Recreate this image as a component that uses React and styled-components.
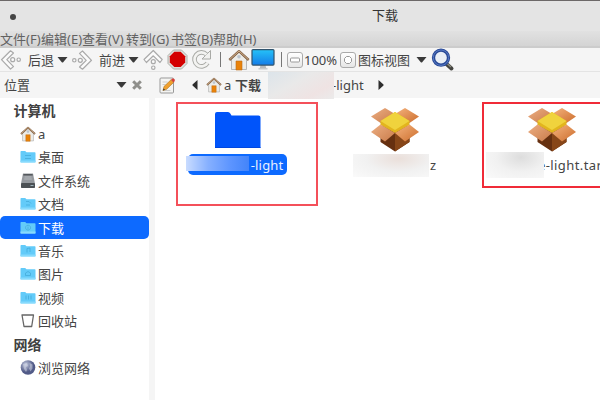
import React from 'react';
import styled, { createGlobalStyle } from 'styled-components';

const GlobalStyle = createGlobalStyle`
  body {
    margin: 0;
    overflow: hidden;
  }
  svg {
    display: block;
    flex: none;
  }
`;

const Window = styled.div`
  display: flex;
  flex-direction: column;
  width: 600px;
  height: 400px;
  overflow: hidden;
  background: #f5f5f5;
  color: #454545;
  font-family: 'Noto Sans', 'Noto Sans CJK SC', sans-serif;
  font-size: 13px;
  line-height: 18px;
  white-space: nowrap;
`;

const TitleBar = styled.div`
  display: flex;
  align-items: center;
  box-sizing: border-box;
  height: 31px;
  border-top: 1px solid #6c6868;
  background: #e4e4e4;
`;

const Dot = styled.span`
  width: 6px;
  height: 6px;
  margin: 1px 0 0 10px;
  border-radius: 50%;
  background: #444;
`;

const Title = styled.span`
  margin: 0 0 2px 356px;
  color: #333;
`;

const MenuBar = styled.div`
  display: flex;
  align-items: center;
  box-sizing: border-box;
  height: 17px;
  border-bottom: 2px solid #cccccc;
  background: linear-gradient(#e1e1e1, #d4d4d4);
`;

const MenuItem = styled.span`
  width: ${(props) => props.$width}px;
  color: #626262;
`;

const ToolBar = styled.div`
  display: flex;
  align-items: center;
  box-sizing: border-box;
  height: 24px;
  border-bottom: 1px solid #e4e4e4;
`;

const Tool = styled.div`
  display: flex;
  align-items: center;
  width: ${(props) => props.$width}px;
  margin-left: ${(props) => props.$gap || 0}px;
`;

const Separator = styled.div`
  width: 1px;
  height: 15px;
  margin-left: ${(props) => props.$gap}px;
  background: #777;
`;

const ZoomButton = styled.div`
  display: flex;
  align-items: center;
  justify-content: center;
  box-sizing: border-box;
  width: 16px;
  height: 16px;
  margin-left: ${(props) => props.$gap}px;
  border: 1px solid #aaa;
  border-radius: 3px;
  background: linear-gradient(#fff, #e6e6e6);
`;

const LocationBar = styled.div`
  display: flex;
  align-items: center;
  height: 26px;
`;

const PaneHeader = styled.div`
  display: flex;
  align-items: center;
  width: 155px;
`;

const PaneTitle = styled.span`
  width: 112px;
  margin-left: 4px;
`;

const Crumbs = styled.div`
  display: flex;
  align-items: center;
  height: 26px;
  padding-left: 4px;
`;

const Crumb = styled.span`
  width: ${(props) => props.$width}px;
  margin-left: ${(props) => props.$gap || 0}px;
  font-weight: ${(props) => (props.$current ? 700 : 400)};
`;

const CrumbSmudge = styled.div`
  position: relative;
  z-index: 1;
  width: 66px;
  height: 27px;
  margin-left: 5px;
  background: linear-gradient(150deg, #dce4ea, #e9e9e9 40%, #efe3e3 75%, #ebebeb);
`;

const Body = styled.div`
  display: flex;
  flex: 1;
`;

const SideBar = styled.div`
  width: 149px;
  padding-top: 1px;
  margin-right: 6px;
  background: #fff;
`;

const Heading = styled.div`
  display: flex;
  align-items: center;
  height: 23.4px;
  padding-left: 13.5px;
  font-size: 14px;
  font-weight: 700;
  color: #404040;
`;

const Place = styled.div`
  display: flex;
  align-items: center;
  gap: 2px;
  height: 23.4px;
  padding-left: 20px;
  border-radius: 5px;
  color: ${(props) => (props.$active ? '#fff' : '#454545')};
  background: ${(props) => (props.$active ? '#0d6aff' : 'transparent')};
`;

const Files = styled.div`
  display: grid;
  grid-template-columns: repeat(3, 157px);
  flex: 1;
  padding-left: 4px;
  overflow: hidden;
  background: #fff;
`;

const FileTile = styled.div`
  position: relative;
  display: flex;
  flex-direction: column;
  align-items: center;
  height: 110px;
  padding-top: 8px;
`;

const Picture = styled.div`
  display: flex;
  justify-content: center;
  box-sizing: border-box;
  width: 50px;
  height: 48px;
  padding-top: ${(props) => props.$drop}px;
`;

const SelectedName = styled.div`
  display: flex;
  align-items: center;
  justify-content: flex-end;
  box-sizing: border-box;
  width: 99px;
  height: 21px;
  margin-right: 1px;
  padding-right: 3px;
  border-radius: 5px;
  background: #0d6aff;
  color: #e8f0ff;
  letter-spacing: 0.2px;
`;

const FileName = styled.div`
  display: flex;
  align-items: center;
  align-self: flex-start;
  height: 22px;
  margin-left: ${(props) => props.$gap}px;
  letter-spacing: 0.4px;
`;

const Smudge = styled.div`
  position: relative;
  z-index: 1;
  width: ${(props) => props.$width}px;
  height: ${(props) => props.$height}px;
  margin-right: ${(props) => props.$overlap}px;
  background: radial-gradient(ellipse at 60% 20%, ${(props) => props.$tint}, #f1f1f1 50%, #fafafa);
`;

const BlueSmudge = styled.div`
  position: absolute;
  left: 27px;
  top: 58px;
  width: 63px;
  height: 15px;
  background: linear-gradient(90deg, #c9dcff, #86b0ff 35%, #5d95ff 70%, #4384fa);
`;

const Highlight = styled.div`
  position: absolute;
  left: ${(props) => props.$left}px;
  top: 4px;
  box-sizing: border-box;
  width: ${(props) => props.$width}px;
  height: ${(props) => props.$height}px;
  border: 2px solid ${(props) => props.$color};
`;

const CaretDown = () => (
  <svg width="11" height="6" viewBox="0 0 11 6">
    <path d="M0.5 0h10L6.2 5.2q-.7.6-1.4 0z" fill="#3a3a3a" />
  </svg>
);

const CaretSide = ({ flip }) => (
  <svg width="6" height="10" viewBox="0 0 6 10" transform={flip ? 'scale(-1 1)' : undefined}>
    <path d="M0.5 0L5.5 4.4v1.2L.5 10z" fill="#2d2d2d" />
  </svg>
);

const Arrow = ({ turn = 0 }) => (
  <svg width="22" height="22" viewBox="0 0 22 22">
    <g transform={`rotate(${turn} 11 11)`} stroke="#aaa" strokeWidth="1.2" fill="#fbfbfb">
      <path d="M10.500 1.800L13.500 4 6.800 10.700l6.700 6.900-3 2.400L1.500 10.700z" strokeLinejoin="round" />
      <circle cx="12.700" cy="10.700" r="2" />
      <circle cx="18.700" cy="10.700" r="1.700" />
    </g>
  </svg>
);

const StopIcon = () => (
  <svg width="21" height="21" viewBox="0 0 21 21">
    <path d="M6.500 1h8L20 6.500v8L14.500 20h-8L1 14.500v-8z" fill="#dedfdb" stroke="#aeb0aa" />
    <path d="M7.300 2.800h6.400l4.500 4.500v6.200L13.700 18H7.300l-4.500-4.500V7.300z" fill="#d40000" />
  </svg>
);

const ReloadIcon = () => (
  <svg width="21" height="21" viewBox="0 0 21 21" fill="none">
    <path d="M15.500 5.500A7 7 0 1 0 16.500 14" stroke="#a9aaa6" strokeWidth="4.600" />
    <path d="M19.500 1.500v8.500h-8.500z" fill="#f1f1ef" stroke="#a9aaa6" />
    <path d="M15.500 5.500A7 7 0 1 0 16.500 14" stroke="#f3f3f1" strokeWidth="2.700" />
  </svg>
);

const HomeIcon = ({ size }) => (
  <svg width={size} height={size} viewBox="0 0 22 22">
    <path d="M3.500 10L11 3l7.500 7v10.500h-15z" fill="#ecece8" stroke="#aaa" strokeWidth=".8" />
    <path d="M8 12h6v9H8z" fill="#e98208" stroke="#bd6d17" strokeWidth=".6" />
    <circle cx="11" cy="7.700" r="1.800" fill="#bcc5ce" />
    <path d="M1.300 11L11 2.200l9.700 8.800" fill="none" stroke="#856447" strokeWidth="2.400" strokeLinejoin="round" />
    <path d="M1.600 10.600L11 2l9.400 8.600" fill="none" stroke="#d0b08c" strokeWidth="1" />
  </svg>
);

const MonitorIcon = () => (
  <svg width="24" height="22" viewBox="0 0 24 22">
    <defs>
      <linearGradient id="screen" x2="0" y2="1">
        <stop stopColor="#25c3f8" />
        <stop offset="1" stopColor="#147ce8" />
      </linearGradient>
    </defs>
    <path d="M9.500 16h5l.8 3.500h-6.600z" fill="#b8bbbd" />
    <path d="M7.500 19.800h9" stroke="#c6c8ca" strokeWidth="1.400" />
    <rect x="1" y=".6" width="22" height="15.500" rx="1" fill="url(#screen)" stroke="#30546e" strokeWidth="1.200" />
  </svg>
);

const SearchIcon = () => (
  <svg width="24" height="24" viewBox="0 0 24 24">
    <path d="M15 15.500l5.500 5" stroke="#454541" strokeWidth="4" strokeLinecap="round" />
    <path d="M16 15.500l4 3.500" stroke="#8e8e80" strokeWidth="1.300" />
    <circle cx="10" cy="9.700" r="7.500" fill="#e9eff6" stroke="#2a4a97" strokeWidth="3.300" />
    <circle cx="10" cy="9.700" r="7.700" fill="none" stroke="#577bc4" strokeWidth="1" />
  </svg>
);

const EditIcon = () => (
  <svg width="17" height="18" viewBox="0 0 17 18">
    <rect x="1" y="2" width="13.500" height="15" rx="1" fill="#f4f4f2" stroke="#999" />
    <path d="M3.500 6h5M3.500 8.500h3M3.500 14.500h8" stroke="#ccc" />
    <path d="M4 14.500l1-4L12 3.800l2.600 2.600-7 6.900z" fill="#f0a02e" stroke="#a87222" strokeWidth=".6" />
    <path d="M12 3.800l1.200-1.200q1.300-.6 2.200.5.900 1.100.2 2.200l-1 1.100z" fill="#d8423b" />
    <path d="M4 14.500l.5-2 1.500 1.300z" fill="#333" />
  </svg>
);

const CloseIcon = () => (
  <svg width="12" height="12" viewBox="0 0 12 12">
    <path d="M2.200 2.200l7.600 7.600M9.800 2.200L2.200 9.800" stroke="#8f8f8b" strokeWidth="3" />
  </svg>
);

const marks = {
  desktop: 'M5 6.500h6M5 9.500h6',
  documents: 'M6 5.500h3l2 2M6 9h4',
  downloads: 'M8 5.200a2.500 2.500 0 1 0 .1 0M8 6.500v3',
  music: 'M7 9.500V5.500l3-.5v4',
  pictures: 'M5.500 9.500V7q2.500-3 5 0v2.500z',
  videos: 'M6 5.500v4M8.500 5.500v4M11 5.500v4',
};

const PlaceFolder = ({ mark }) => (
  <svg width="16" height="16" viewBox="0 0 16 16">
    <path d="M.5 2.700q0-.7.700-.7h4l1.300 1.200h8.300q.7 0 .7.700v9.100H.5z" fill="#63cbf9" />
    <path d="M.5 11.500h15v1.700q0 .5-.5.500H1q-.5 0-.5-.5z" fill="#86dafd" />
    <path d={marks[mark]} fill="none" stroke="#45abd9" strokeWidth=".8" />
  </svg>
);

const DiskIcon = () => (
  <svg width="16" height="16" viewBox="0 0 16 16">
    <path d="M3 .5h10l2 10H1z" fill="#95999e" />
    <path d="M3.500 1h9l.3 1.500H3.200z" fill="#55595d" />
    <path d="M4.500 4h7M4.200 6h7.600" stroke="#b4b8bc" />
    <rect x="1" y="10" width="14" height="5" rx=".7" fill="#4c5155" />
    <path d="M10.500 12.500h3" stroke="#9db3bc" />
  </svg>
);

const TrashIcon = () => (
  <svg width="16" height="16" viewBox="0 0 16 16">
    <path d="M2 2h11.500L11.700 13.500H4z" fill="#fff" stroke="#666" strokeWidth="1.300" strokeLinejoin="round" />
  </svg>
);

const GlobeIcon = () => (
  <svg width="16" height="16" viewBox="0 0 16 16">
    <defs>
      <radialGradient id="globe" cx=".35" cy=".3">
        <stop stopColor="#bfc6dc" />
        <stop offset="1" stopColor="#525b88" />
      </radialGradient>
    </defs>
    <circle cx="8" cy="7.500" r="7.300" fill="url(#globe)" />
    <path d="M3 4l4-1 1 3-2 1 1 3-1 2-2-3zM9.500 3l3 1.500v4l-2 3-1.500-3 1-2z" fill="#dce0ec" opacity=".5" />
  </svg>
);

const BigFolder = () => (
  <svg width="46" height="38" viewBox="0 0 46 38">
    <path d="M0 3q0-2 2-2h11q1.500 0 2.300 1.500L16.500 4.500H43.500q2 0 2 2V37H0z" fill="#0054fa" />
    <path d="M0 36.500h45.500" stroke="#0047e0" />
  </svg>
);

const PackageIcon = () => (
  <svg width="48" height="46" viewBox="0 0 48 46">
    <defs>
      <linearGradient id="flapA" x2="1" y2="1">
        <stop stopColor="#edaf83" />
        <stop offset="1" stopColor="#c97b4a" />
      </linearGradient>
      <linearGradient id="flapB" x2="1" y2="1">
        <stop stopColor="#f5b47e" />
        <stop offset="1" stopColor="#cc6d2d" />
      </linearGradient>
    </defs>
    <path d="M9.500 20L24 12l14.500 8v15L24 44.500 9.500 35z" fill="#663010" />
    <path d="M24 26v18.500L38.500 35V20z" fill="#874618" />
    <path d="M0 9.500L14 1l10 6L9.500 16z" fill="url(#flapA)" />
    <path d="M48 9.500L34 1 24 7l14.500 9z" fill="url(#flapB)" />
    <path d="M9.500 14L24 5l14.500 9v4L24 26 9.500 18z" fill="#e2b51d" />
    <path d="M9.500 14L24 5l14.500 9L24 23z" fill="#f0d33d" />
    <path d="M0 25l9.500-7.500L24 26 14 34.500z" fill="url(#flapA)" />
    <path d="M48 25l-9.500-7.500L24 26l10 8.500z" fill="url(#flapB)" />
  </svg>
);

const menus = [
  ['文件(F)', 41],
  ['编辑(E)', 41],
  ['查看(V)', 44],
  ['转到(G)', 45],
  ['书签(B)', 42],
  ['帮助(H)', 45],
];

const places = [
  { name: 'a', icon: <HomeIcon size={16} /> },
  { name: '桌面', icon: <PlaceFolder mark="desktop" /> },
  { name: '文件系统', icon: <DiskIcon /> },
  { name: '文档', icon: <PlaceFolder mark="documents" /> },
  { name: '下载', icon: <PlaceFolder mark="downloads" />, active: true },
  { name: '音乐', icon: <PlaceFolder mark="music" /> },
  { name: '图片', icon: <PlaceFolder mark="pictures" /> },
  { name: '视频', icon: <PlaceFolder mark="videos" /> },
  { name: '回收站', icon: <TrashIcon /> },
];

class App extends React.Component {
  render () {
    return (
      <Window>
        <GlobalStyle />
        <TitleBar>
          <Dot />
          <Title>下载</Title>
        </TitleBar>
        <MenuBar>
          {menus.map(([label, width]) => (
            <MenuItem key={label} $width={width}>{label}</MenuItem>
          ))}
        </MenuBar>
        <ToolBar>
          <Tool $width={22}><Arrow /></Tool>
          <Tool $width={26} $gap={6}>后退</Tool>
          <Tool $width={11} $gap={3}><CaretDown /></Tool>
          <Tool $width={22} $gap={3}><Arrow turn={180} /></Tool>
          <Tool $width={26} $gap={6}>前进</Tool>
          <Tool $width={11} $gap={3}><CaretDown /></Tool>
          <Tool $width={22} $gap={3}><Arrow turn={90} /></Tool>
          <Tool $width={21} $gap={3}><StopIcon /></Tool>
          <Tool $width={21} $gap={3}><ReloadIcon /></Tool>
          <Separator $gap={8} />
          <Tool $width={22} $gap={7}><HomeIcon size={22} /></Tool>
          <Tool $width={24} $gap={1}><MonitorIcon /></Tool>
          <Separator $gap={6} />
          <ZoomButton $gap={5}>
            <svg width="10" height="6"><rect x=".5" y="1" width="9" height="4" rx="1" fill="#fff" stroke="#999" /></svg>
          </ZoomButton>
          <Tool $width={36} $gap={1}>100%</Tool>
          <ZoomButton $gap={0}>
            <svg width="10" height="10"><path d="M3.500 1.500h3l2 2v3l-2 2h-3l-2-2v-3z" fill="#fff" stroke="#999" strokeLinejoin="round" /></svg>
          </ZoomButton>
          <Tool $width={53} $gap={2}>图标视图</Tool>
          <Tool $width={11} $gap={5}><CaretDown /></Tool>
          <Tool $width={24} $gap={4}><SearchIcon /></Tool>
        </ToolBar>
        <LocationBar>
          <PaneHeader>
            <PaneTitle>位置</PaneTitle>
            <CaretDown />
            <Tool $width={12} $gap={4}><CloseIcon /></Tool>
          </PaneHeader>
          <Crumbs>
            <EditIcon />
            <Tool $width={6} $gap={16}><CaretSide flip /></Tool>
            <Tool $width={16} $gap={8}><HomeIcon size={16} /></Tool>
            <Crumb $width={8} $gap={2}>a</Crumb>
            <Crumb $width={28} $gap={3} $current>下载</Crumb>
            <CrumbSmudge />
            <Crumb $width={32} $gap={-2}>-light</Crumb>
            <Tool $width={6} $gap={14}><CaretSide /></Tool>
          </Crumbs>
        </LocationBar>
        <Body>
          <SideBar>
            <Heading>计算机</Heading>
            {places.map((place) => (
              <Place key={place.name} $active={place.active}>
                {place.icon}
                {place.name}
              </Place>
            ))}
            <Heading>网络</Heading>
            <Place>
              <GlobeIcon />
              浏览网络
            </Place>
          </SideBar>
          <Files>
            <FileTile>
              <Picture $drop={5}><BigFolder /></Picture>
              <SelectedName>-light</SelectedName>
              <BlueSmudge />
              <Highlight $left={17} $width={142} $height={104} $color="#f4505a" />
            </FileTile>
            <FileTile>
              <Picture $drop={1}><PackageIcon /></Picture>
              <FileName $gap={37}>
                <Smudge $width={76} $height={23} $overlap={1} $tint="#eadfda" />
                z
              </FileName>
            </FileTile>
            <FileTile>
              <Picture $drop={1}><PackageIcon /></Picture>
              <FileName $gap={13}>
                <Smudge $width={58} $height={26} $overlap={-6} $tint="#dddddd" />
                e-light.tar
              </FileName>
              <Highlight $left={9} $width={142} $height={86} $color="#f02b38" />
            </FileTile>
          </Files>
        </Body>
      </Window>
    )
  }
}

export default App;
